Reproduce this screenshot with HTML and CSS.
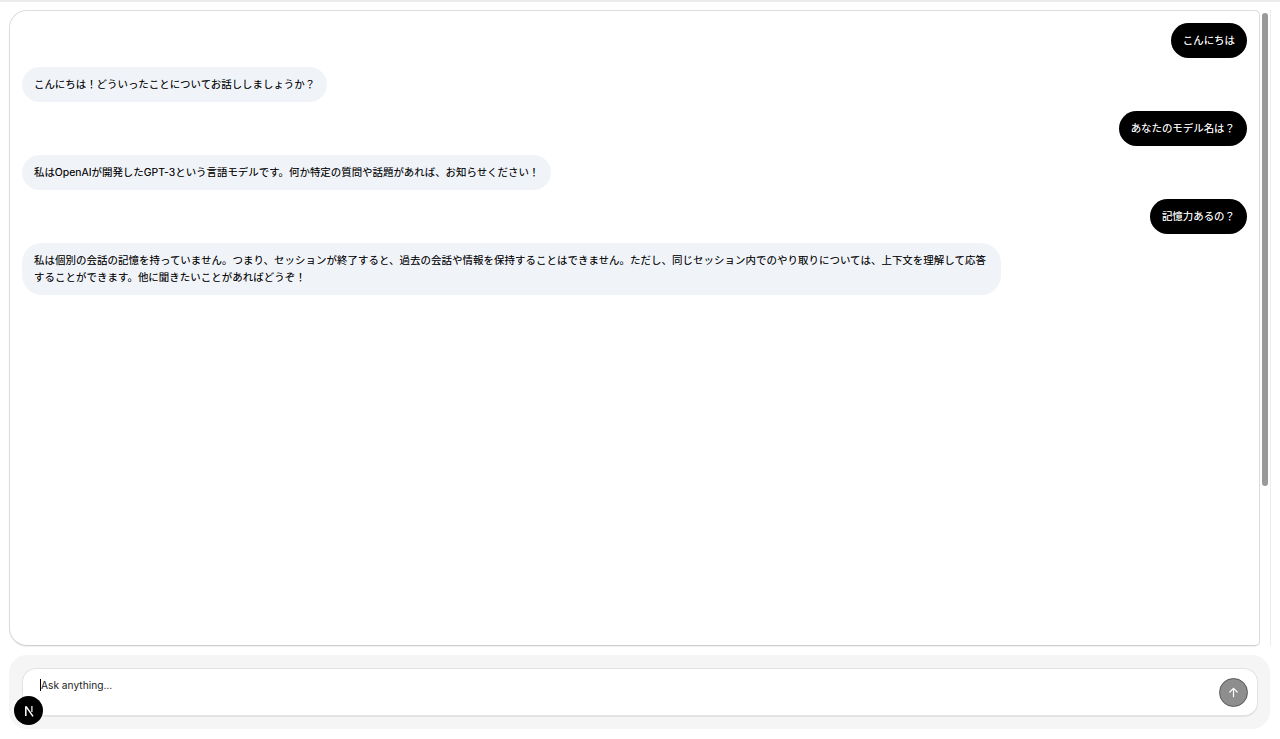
FILE: index.html
```html
<!DOCTYPE html>
<html lang="ja">
<head>
    <meta charset="UTF-8">
    <meta name="viewport" content="width=device-width, initial-scale=1.0">
    <title>Chat</title>
    <link rel="stylesheet" href="styles.css">
</head>
<body>
    <div class="top-line"></div>
    <div class="chat-area">
        <div class="chat-card">
            <div class="message-row user"><div class="bubble">こんにちは</div></div>
            <div class="message-row"><div class="bubble">こんにちは！どういったことについてお話ししましょうか？</div></div>
            <div class="message-row user"><div class="bubble">あなたのモデル名は？</div></div>
            <div class="message-row"><div class="bubble">私はOpenAIが開発したGPT-3という言語モデルです。何か特定の質問や話題があれば、お知らせください！</div></div>
            <div class="message-row user"><div class="bubble">記憶力あるの？</div></div>
            <div class="message-row"><div class="bubble long">私は個別の会話の記憶を持っていません。つまり、セッションが終了すると、過去の会話や情報を保持することはできません。ただし、同じセッション内でのやり取りについては、上下文を理解して応答することができます。他に聞きたいことがあればどうぞ！</div></div>
        </div>
        <div class="scroll-track"><div class="scroll-thumb"></div></div>
    </div>
    <div class="composer">
        <div class="input-box">
            <div class="input-text"><span class="caret"></span>Ask anything...</div>
            <button class="send-button" aria-label="Send">
                <svg width="11" height="11" viewBox="0 0 12 12" fill="none" stroke="currentColor" stroke-width="1.3" stroke-linecap="round" stroke-linejoin="round">
                    <path d="M6 10.5V1.5M2 5.5l4-4 4 4"/>
                </svg>
            </button>
        </div>
    </div>
    <div class="next-badge">
        <svg width="12" height="12" viewBox="0 0 12 12" fill="none" stroke="#fff" stroke-width="1.5">
            <path d="M2.8 11V1.2M3 1.4L10 11.4"/>
            <path d="M8.9 1v6" stroke-width="1.2"/>
        </svg>
    </div>
</body>
</html>
```

FILE: styles.css
```css
* {
    box-sizing: border-box;
}

body {
    margin: 0;
    height: 739px;
    overflow: hidden;
    background: #fff;
    font-family: 'Inter', 'Noto Sans CJK JP', sans-serif;
    font-size: 10.44px;
    line-height: 17px;
    color: #000;
}

.top-line {
    height: 2px;
    background: #ececec;
}

.chat-area {
    display: flex;
    height: 636px;
    margin: 8px 9px 0 9px;
}

.chat-card {
    flex: 1;
    display: flex;
    flex-direction: column;
    gap: 9px;
    padding: 12px 12px 0 12px;
    border: 1px solid #dcdcdc;
    border-bottom-color: #cfcfcf;
    border-radius: 18px 5px 5px 18px;
    box-shadow: 0 1px 1px rgba(0, 0, 0, 0.06);
}

.message-row {
    display: flex;
}

.message-row.user {
    justify-content: flex-end;
}

.bubble {
    max-width: 979px;
    padding: 9px 12px;
    border-radius: 20px;
    background: #f0f3f8;
    text-shadow: 0 0 0.5px rgba(0, 0, 0, 0.3);
}

.bubble.long {
    letter-spacing: 0.055px;
}

.user .bubble {
    background: #000;
    color: #fff;
    text-shadow: 0 0 0.5px rgba(255, 255, 255, 0.5);
}

.scroll-track {
    flex: none;
    width: 11px;
    padding: 3px 2px 0 2px;
    border-right: 1px solid #ececec;
}

.scroll-thumb {
    width: 6px;
    height: 473px;
    border-radius: 3px;
    background: #9a9a9a;
}

.composer {
    height: 74px;
    margin: 9px 10px 0 9px;
    padding: 13px 12px 0 13px;
    border-radius: 18px;
    background: #f5f5f5;
}

.input-box {
    display: flex;
    justify-content: space-between;
    height: 49px;
    padding: 8px 9px 0 17px;
    border: 1px solid #e2e2e2;
    border-bottom-width: 2px;
    border-radius: 14px;
    background: #fff;
}

.input-text {
    font-size: 10.2px;
    color: #222;
}

.caret {
    display: inline-block;
    width: 1px;
    height: 12px;
    margin-bottom: -2px;
    background: #000;
}

.send-button {
    display: flex;
    align-items: center;
    justify-content: center;
    width: 29px;
    height: 29px;
    margin-top: 1px;
    padding: 0;
    border: 1px solid #555;
    border-radius: 50%;
    background: radial-gradient(circle, #8e8e8e 70%, #6e6e6e 100%);
    color: #fff;
}

.next-badge {
    position: absolute;
    left: 14px;
    top: 696px;
    display: flex;
    align-items: center;
    justify-content: center;
    width: 29px;
    height: 29px;
    border-radius: 50%;
    background: #000;
    box-shadow: 0 0 6px rgba(255, 255, 255, 0.8);
}
```
